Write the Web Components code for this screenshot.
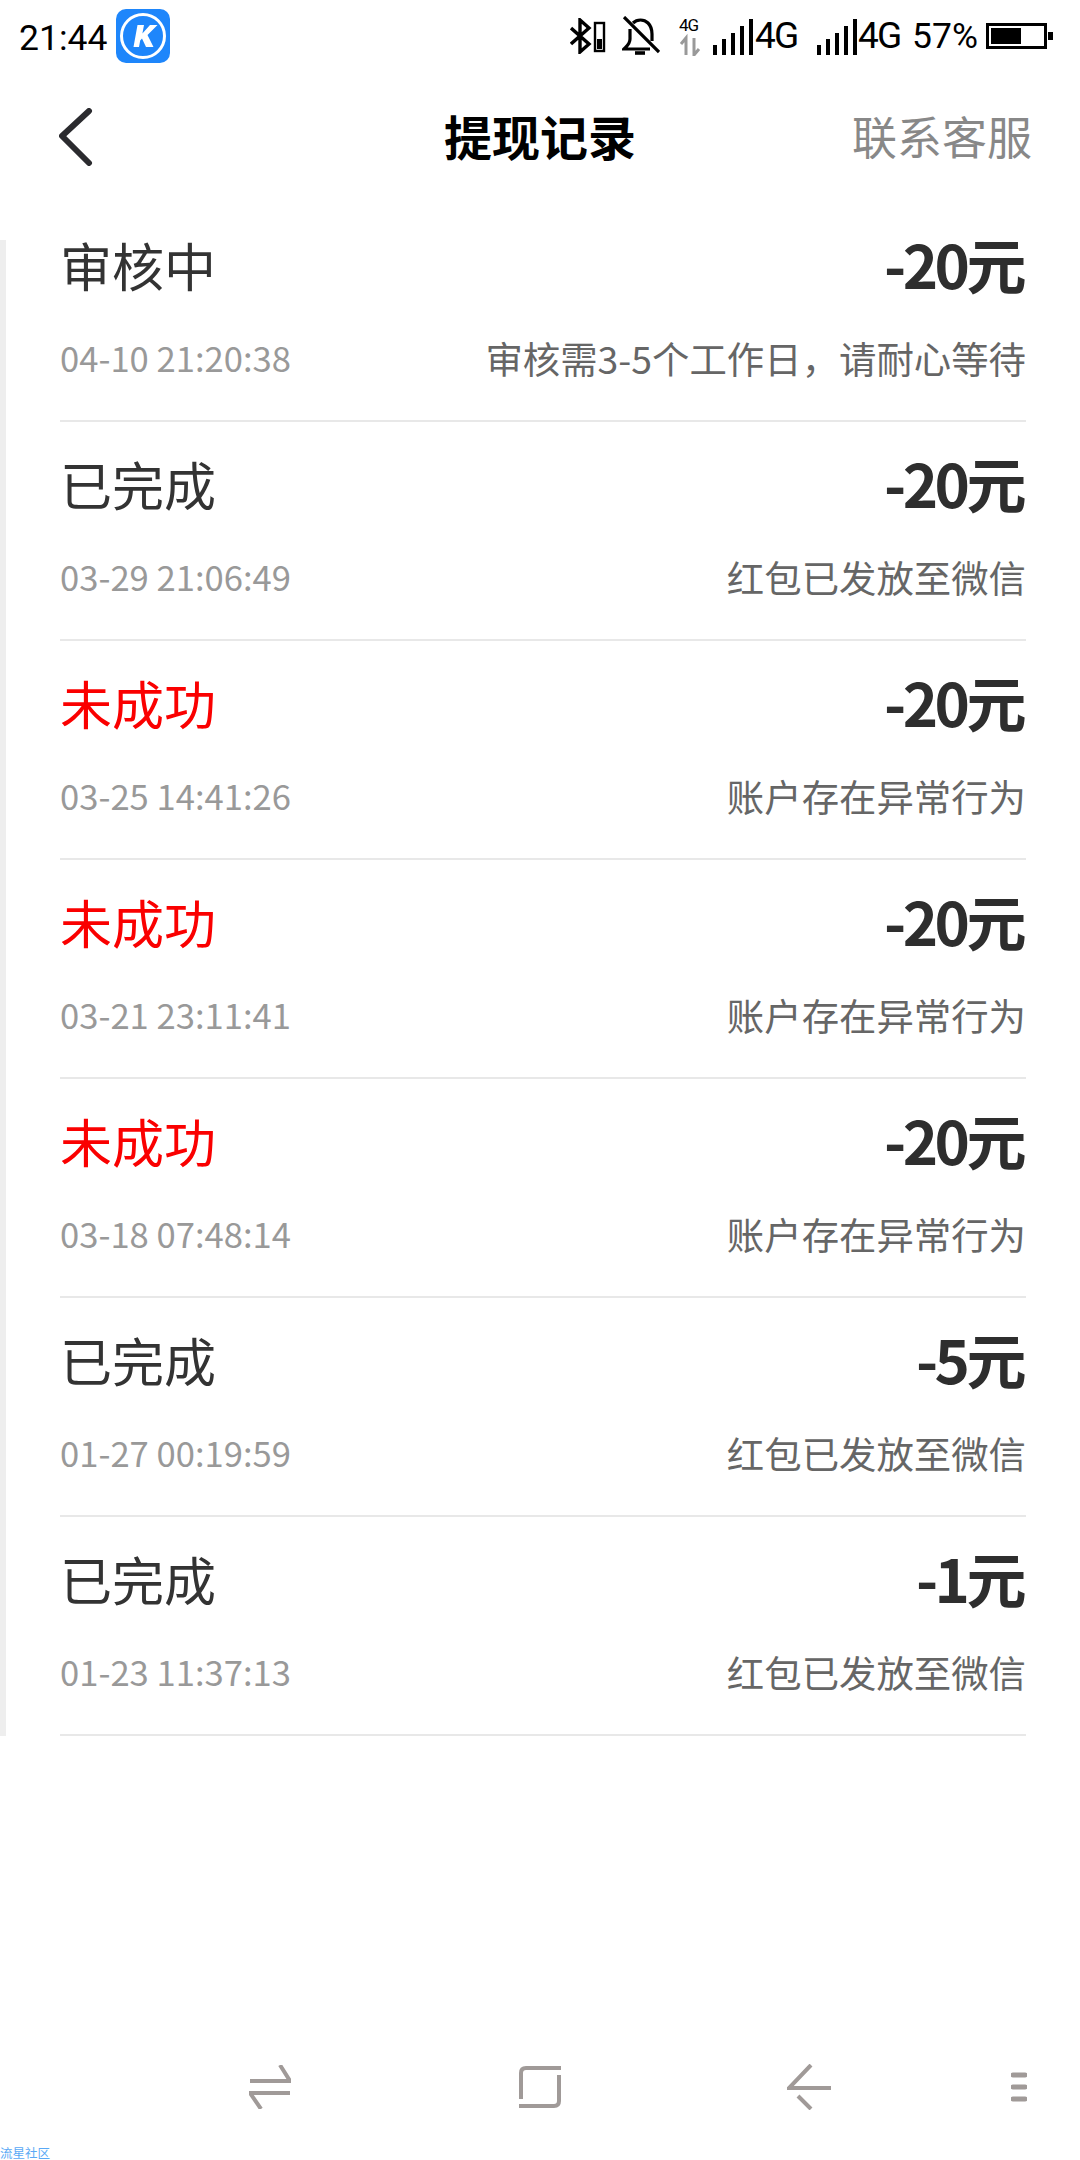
<!DOCTYPE html>
<html lang="zh">
<head>
<meta charset="utf-8">
<title>提现记录</title>
<style>
    html, body {
        margin: 0;
        background: #fff;
    }
    body {
        width: 1080px;
        height: 2160px;
        overflow: hidden;
        display: flex;
        flex-direction: column;
        font-family: "Noto Sans CJK SC", "Noto Sans", sans-serif;
    }
</style>
</head>
<body>
<status-bar></status-bar>
<nav-bar title="提现记录" action="联系客服"></nav-bar>
<record-list>
    <record-row status="审核中" amount="-20元" time="04-10 21:20:38" note="审核需3-5个工作日，请耐心等待"></record-row>
    <record-row status="已完成" amount="-20元" time="03-29 21:06:49" note="红包已发放至微信"></record-row>
    <record-row status="未成功" failed amount="-20元" time="03-25 14:41:26" note="账户存在异常行为"></record-row>
    <record-row status="未成功" failed amount="-20元" time="03-21 23:11:41" note="账户存在异常行为"></record-row>
    <record-row status="未成功" failed amount="-20元" time="03-18 07:48:14" note="账户存在异常行为"></record-row>
    <record-row status="已完成" amount="-5元" time="01-27 00:19:59" note="红包已发放至微信"></record-row>
    <record-row status="已完成" amount="-1元" time="01-23 11:37:13" note="红包已发放至微信"></record-row>
</record-list>
<soft-keys></soft-keys>

<script>
const signalIcon = `
    <svg width="40" height="36" viewBox="0 0 40 36" fill="#000" style="margin-top:2px">
        <rect x="0" y="26" width="4" height="10"/>
        <rect x="9" y="20" width="4" height="16"/>
        <rect x="18" y="14" width="4" height="22"/>
        <rect x="27" y="7" width="4" height="29"/>
        <rect x="36" y="0" width="4" height="36"/>
    </svg>`;

class StatusBar extends HTMLElement {
    constructor() {
        super();
        this.attachShadow({mode : "open"});
        this.shadowRoot.innerHTML = `
            <style>
                :host {
                    display: flex;
                    align-items: center;
                    justify-content: space-between;
                    height: 72px;
                    padding: 0 27px 0 19px;
                    font-family: Roboto, sans-serif;
                    font-size: 35.5px;
                    color: #000;
                }
                .side {
                    display: flex;
                    align-items: center;
                }
                .app {
                    margin-left: 9px;
                }
                .clock {
                    padding-top: 3px;
                }
                svg {
                    display: block;
                }
                .net {
                    font-size: 37px;
                    letter-spacing: -2px;
                    line-height: 36px;
                }
            </style>
            <div class="side">
                <span class="clock">21:44</span>
                <svg class="app" width="54" height="54" viewBox="0 0 54 54">
                    <rect width="54" height="54" rx="10" fill="#1e86fb"/>
                    <circle cx="27" cy="27" r="21.5" fill="none" stroke="#fff" stroke-width="3"/>
                    <path d="M19.5 38 L23.5 16 H30 L28.4 24.6 L36 16 H43.5 L33.5 26 L39.5 38 H32 L28 29.6 L26.2 31.6 L25 38 Z" fill="#fff" transform="translate(-2 0)"/>
                </svg>
            </div>
            <div class="side">
                <svg width="37" height="36" viewBox="0 0 37 36" fill="none" stroke="#000" stroke-width="3.4">
                    <path d="M1 10 L19 26 L10 34 V2 L19 10 L1 26"/>
                    <rect x="25" y="5" width="9" height="28" stroke-width="2.4"/>
                    <rect x="27" y="21" width="5" height="10" fill="#000" stroke="none"/>
                </svg>
                <svg style="margin-left:15px" width="38" height="40" viewBox="0 0 38 40" fill="none" stroke="#000" stroke-width="3.2">
                    <path d="M8 13 V23 C8 28 5 30 2 33 H28"/>
                    <path d="M11 7 C15 3 22 3 26 7 C29 10 30 13 30 18 V25"/>
                    <path d="M2 1 L37 36"/>
                    <path d="M13 37 H23" stroke-width="3.6"/>
                </svg>
                <svg style="margin-left:19px" width="25" height="40" viewBox="0 0 25 40">
                    <text x="0" y="15" font-family="Roboto, sans-serif" font-size="17" letter-spacing="-1" fill="#000">4G</text>
                    <path d="M7 22 V39 M2 28 L7 22 V39" fill="none" stroke="#999" stroke-width="3"/>
                    <path d="M15 22 V39 M20 33 L15 39 V22" fill="none" stroke="#999" stroke-width="3"/>
                </svg>
                <span style="margin-left:9px;display:flex">${signalIcon}</span>
                <span class="net" style="margin-left:2px">4G</span>
                <span style="margin-left:20px;display:flex">${signalIcon}</span>
                <span class="net" style="margin-left:1px">4G</span>
                <span style="margin-left:12px">57%</span>
                <svg style="margin-left:8px" width="67" height="26" viewBox="0 0 67 26">
                    <rect x="1.5" y="1.5" width="58" height="23" fill="none" stroke="#000" stroke-width="3"/>
                    <rect x="5" y="5" width="30" height="16" fill="#000"/>
                    <rect x="62" y="9" width="5" height="8" fill="#000"/>
                </svg>
            </div>
        `;
    }
}

class NavBar extends HTMLElement {
    constructor() {
        super();
        this.attachShadow({mode : "open"});
        this.shadowRoot.innerHTML = `
            <style>
                :host {
                    display: grid;
                    grid-template-columns: 1fr auto 1fr;
                    align-items: center;
                    height: 130px;
                    padding: 0 48px;
                    margin-bottom: 38px;
                }
                .title {
                    font-size: 48px;
                    font-weight: 700;
                    color: #000;
                    padding-bottom: 5px;
                }
                .action {
                    justify-self: end;
                    font-size: 45px;
                    color: #888;
                    padding-bottom: 3px;
                }
                svg {
                    display: block;
                    margin-left: 11px;
                }
            </style>
            <svg width="34" height="58" viewBox="0 0 34 58" fill="none" stroke="#2b2b2f" stroke-width="6" stroke-linecap="round" stroke-linejoin="round">
                <path d="M30 3 L3 28 L30 55"/>
            </svg>
            <div class="title">${this.getAttribute("title")}</div>
            <div class="action">${this.getAttribute("action")}</div>
        `;
    }
}

class RecordList extends HTMLElement {
    constructor() {
        super();
        this.attachShadow({mode : "open"});
        this.shadowRoot.innerHTML = `
            <style>
                :host {
                    display: block;
                    border-left: 6px solid #eee;
                }
                /* list is scrolled a little, first row starts above the grey edge */
                .scroller {
                    margin-top: -37px;
                    padding: 0 54px;
                }
            </style>
            <div class="scroller"><slot></slot></div>
        `;
    }
}

class RecordRow extends HTMLElement {
    constructor() {
        super();
        this.attachShadow({mode : "open"});
        const failed = this.hasAttribute("failed");
        this.shadowRoot.innerHTML = `
            <style>
                :host {
                    display: grid;
                    grid-template-columns: 1fr auto;
                    grid-template-rows: 122px 63px;
                    align-content: start;
                    align-items: center;
                    height: 219px;
                    box-sizing: border-box;
                    border-bottom: 2px solid #e8e8e8;
                }
                .status {
                    font-size: 52px;
                    color: ${failed ? "#fa0000" : "#333"};
                }
                .amount {
                    justify-self: end;
                    font-size: 60px;
                    font-weight: 700;
                    color: #2e2e2e;
                    letter-spacing: -3.5px;
                    padding-bottom: 4px;
                    margin-right: 3px;
                }
                .time {
                    font-size: 34.6px;
                    color: #999;
                }
                .note {
                    justify-self: end;
                    font-size: 37.4px;
                    color: #666;
                    padding-top: 3px;
                }
            </style>
            <div class="status">${this.getAttribute("status")}</div>
            <div class="amount">${this.getAttribute("amount")}</div>
            <div class="time">${this.getAttribute("time")}</div>
            <div class="note">${this.getAttribute("note")}</div>
        `;
    }
}

class SoftKeys extends HTMLElement {
    constructor() {
        super();
        this.attachShadow({mode : "open"});
        this.shadowRoot.innerHTML = `
            <style>
                :host {
                    display: flex;
                    flex-direction: column;
                    flex: 1;
                    justify-content: flex-end;
                }
                .keys {
                    display: flex;
                    align-items: center;
                    padding-left: 249px;
                    margin-bottom: 36px;
                }
                svg {
                    display: block;
                    fill: none;
                    stroke: #a09a98;
                    stroke-width: 4;
                }
                .mark {
                    font-size: 12.5px;
                    line-height: 14px;
                    height: 14px;
                    color: #5aa9f5;
                }
            </style>
            <div class="keys">
                <svg width="42" height="44" viewBox="0 0 42 44">
                    <path d="M1 16 H41 L31 0"/>
                    <path d="M41 28 H1 L12 44"/>
                </svg>
                <svg style="margin-left:228px" width="42" height="44" viewBox="0 0 42 44">
                    <path d="M2 34 V8 Q2 3 7 3 H42"/>
                    <path d="M40 10 V36 Q40 41 35 41 H0"/>
                </svg>
                <svg style="margin-left:226px" width="44" height="46" viewBox="0 0 44 46">
                    <path d="M44 24 H2 L24 1"/>
                    <path d="M11 32 L24 45"/>
                </svg>
                <svg style="margin-left:180px" width="16" height="32" viewBox="0 0 16 32" stroke-linecap="round">
                    <path d="M2 4 H14 M2 16 H14 M2 28 H14" style="stroke-width:5"/>
                </svg>
            </div>
            <div class="mark">流星社区</div>
        `;
    }
}

customElements.define("status-bar", StatusBar);
customElements.define("nav-bar", NavBar);
customElements.define("record-list", RecordList);
customElements.define("record-row", RecordRow);
customElements.define("soft-keys", SoftKeys);
</script>
</body>
</html>
